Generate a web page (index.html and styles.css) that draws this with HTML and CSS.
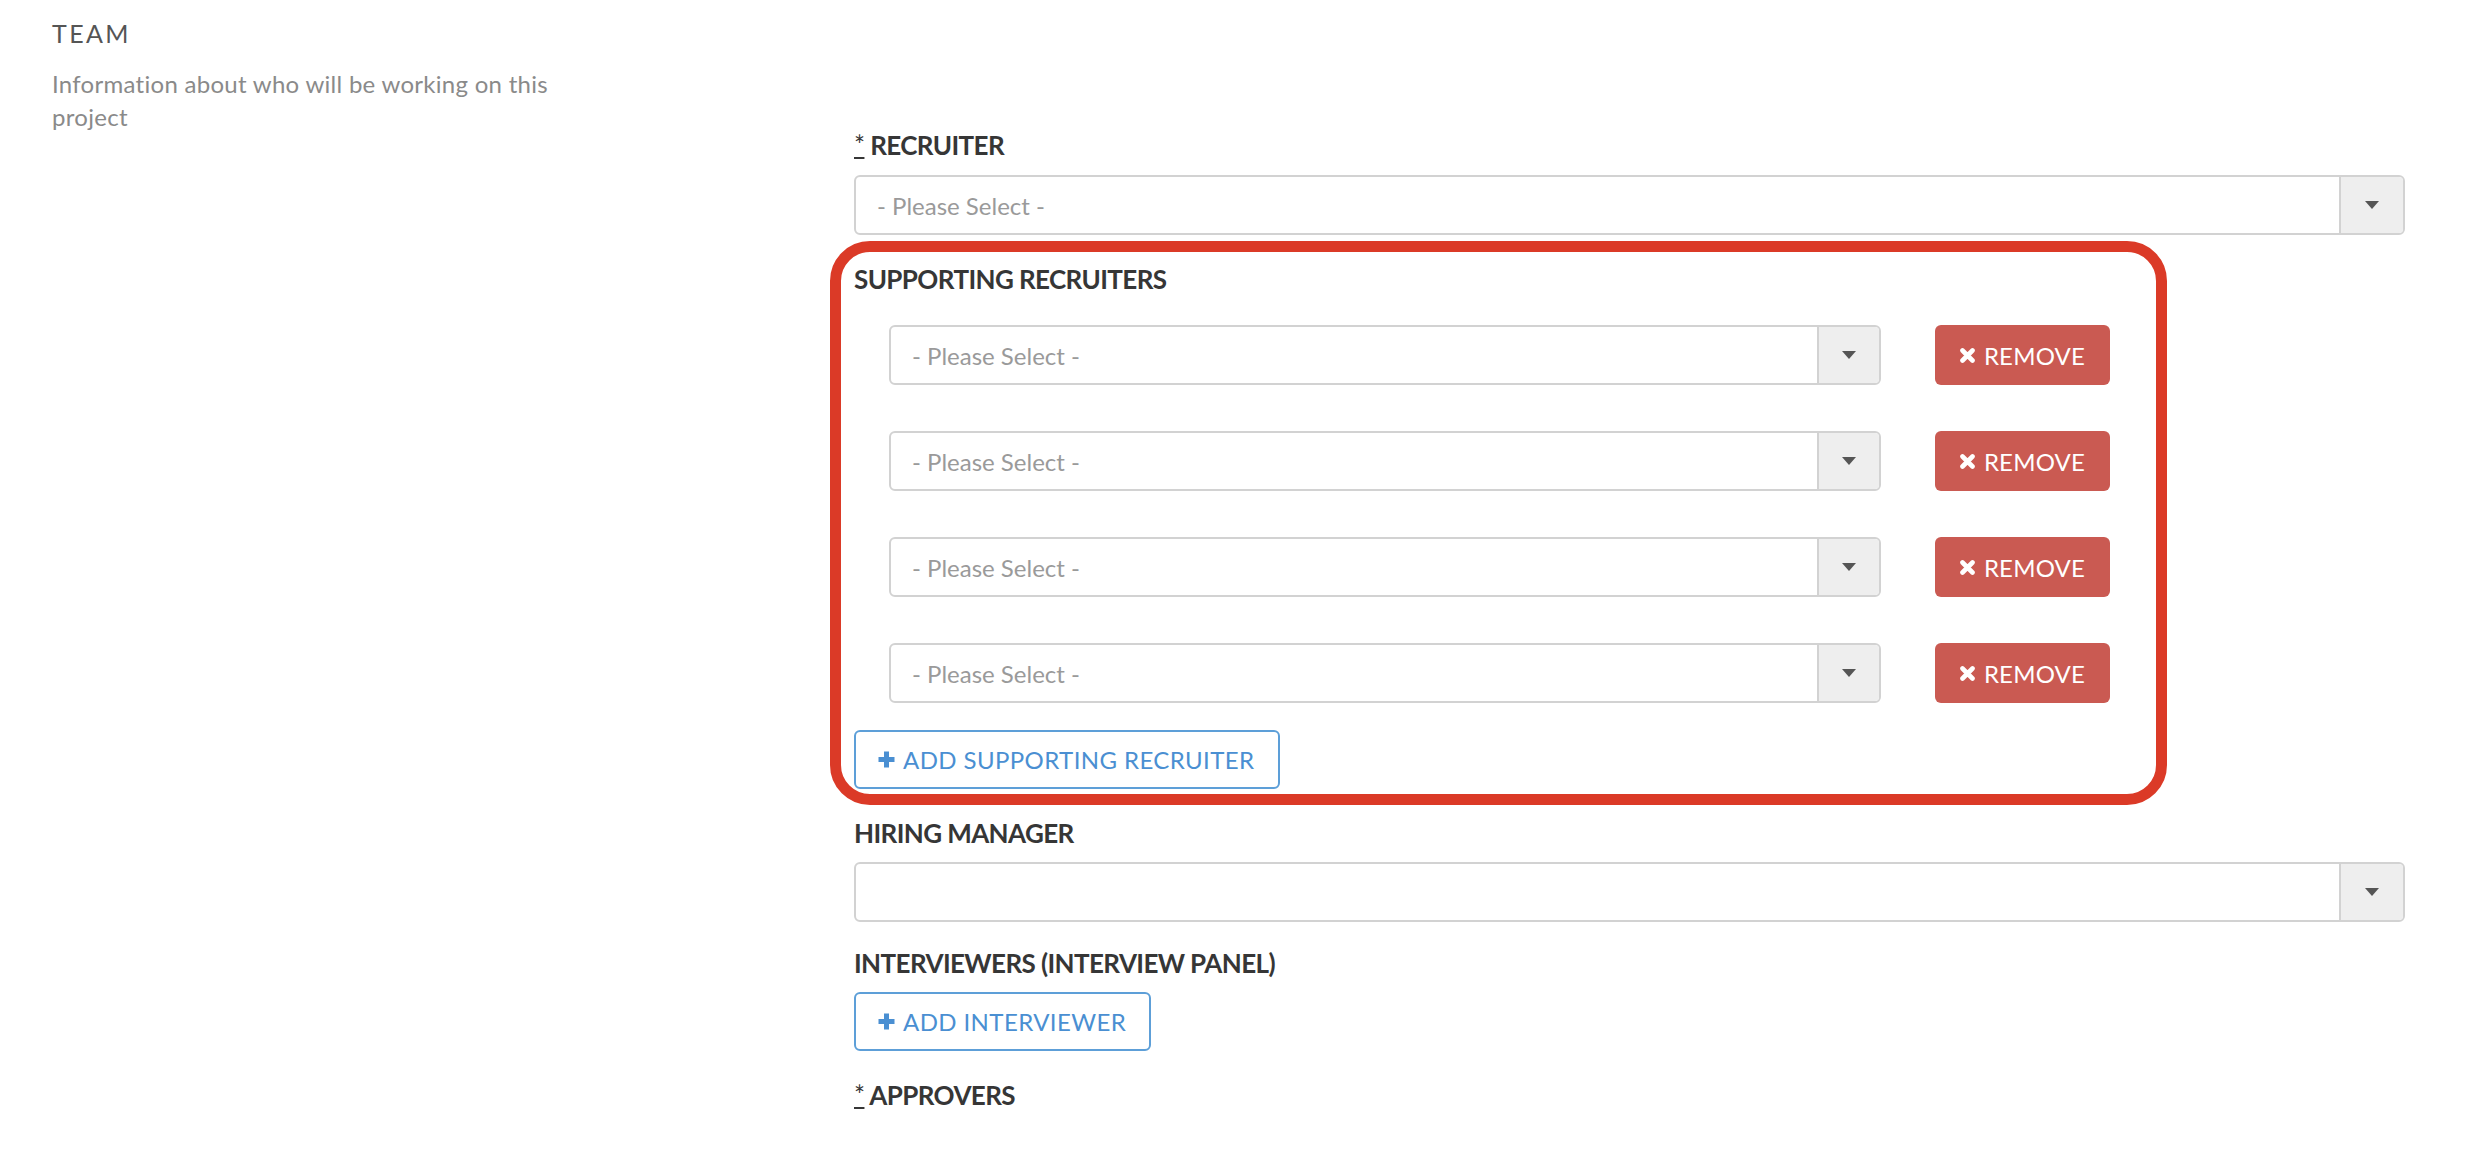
FILE: index.html
```html
<!DOCTYPE html>
<html lang="en">
<head>
<meta charset="utf-8">
<title>Team</title>
<link rel="stylesheet" href="styles.css">
</head>
<body>
<div class="page">
  <section class="intro">
    <h2 class="intro-title">TEAM</h2>
    <p class="intro-text">Information about who will be working on this project</p>
  </section>

  <section class="form">
    <div class="field">
      <label class="field-label"><span class="req">*</span> RECRUITER</label>
      <div class="select">
        <span class="select-value">- Please Select -</span>
        <span class="select-arrow"><svg width="14" height="8" viewBox="0 0 14 8"><path d="M0 0H14L7 8Z" fill="#555"/></svg></span>
      </div>
    </div>

    <div class="group">
      <label class="field-label">SUPPORTING RECRUITERS</label>
      <div class="rows">
        <div class="row">
          <div class="select">
            <span class="select-value">- Please Select -</span>
            <span class="select-arrow"><svg width="14" height="8" viewBox="0 0 14 8"><path d="M0 0H14L7 8Z" fill="#555"/></svg></span>
          </div>
          <button class="btn-remove"><svg class="icon-x" width="15" height="15" viewBox="0 0 15 15"><path d="M2.5 2.5L12.5 12.5M12.5 2.5L2.5 12.5" stroke="#fff" stroke-width="4.6" stroke-linecap="round"/></svg>REMOVE</button>
        </div>
        <div class="row">
          <div class="select">
            <span class="select-value">- Please Select -</span>
            <span class="select-arrow"><svg width="14" height="8" viewBox="0 0 14 8"><path d="M0 0H14L7 8Z" fill="#555"/></svg></span>
          </div>
          <button class="btn-remove"><svg class="icon-x" width="15" height="15" viewBox="0 0 15 15"><path d="M2.5 2.5L12.5 12.5M12.5 2.5L2.5 12.5" stroke="#fff" stroke-width="4.6" stroke-linecap="round"/></svg>REMOVE</button>
        </div>
        <div class="row">
          <div class="select">
            <span class="select-value">- Please Select -</span>
            <span class="select-arrow"><svg width="14" height="8" viewBox="0 0 14 8"><path d="M0 0H14L7 8Z" fill="#555"/></svg></span>
          </div>
          <button class="btn-remove"><svg class="icon-x" width="15" height="15" viewBox="0 0 15 15"><path d="M2.5 2.5L12.5 12.5M12.5 2.5L2.5 12.5" stroke="#fff" stroke-width="4.6" stroke-linecap="round"/></svg>REMOVE</button>
        </div>
        <div class="row">
          <div class="select">
            <span class="select-value">- Please Select -</span>
            <span class="select-arrow"><svg width="14" height="8" viewBox="0 0 14 8"><path d="M0 0H14L7 8Z" fill="#555"/></svg></span>
          </div>
          <button class="btn-remove"><svg class="icon-x" width="15" height="15" viewBox="0 0 15 15"><path d="M2.5 2.5L12.5 12.5M12.5 2.5L2.5 12.5" stroke="#fff" stroke-width="4.6" stroke-linecap="round"/></svg>REMOVE</button>
        </div>
      </div>
      <button class="btn-add"><svg class="icon-plus" width="19" height="19" viewBox="0 0 19 19"><path d="M9.5 1.5V17.5M1.5 9.5H17.5" stroke="#4a8fd2" stroke-width="5"/></svg>ADD SUPPORTING RECRUITER</button>
    </div>

    <div class="field field-hiring">
      <label class="field-label">HIRING MANAGER</label>
      <div class="select">
        <span class="select-value"></span>
        <span class="select-arrow"><svg width="14" height="8" viewBox="0 0 14 8"><path d="M0 0H14L7 8Z" fill="#555"/></svg></span>
      </div>
    </div>

    <div class="field field-interviewers">
      <label class="field-label">INTERVIEWERS (INTERVIEW PANEL)</label>
      <button class="btn-add"><svg class="icon-plus" width="19" height="19" viewBox="0 0 19 19"><path d="M9.5 1.5V17.5M1.5 9.5H17.5" stroke="#4a8fd2" stroke-width="5"/></svg>ADD INTERVIEWER</button>
    </div>

    <div class="field field-approvers">
      <label class="field-label"><span class="req">*</span> APPROVERS</label>
    </div>
  </section>
</div>
</body>
</html>
```

FILE: styles.css
```css
* { box-sizing: border-box; }

html, body {
  margin: 0;
  padding: 0;
  background: #fff;
}

body {
  font-family: Lato, "Open Sans", "Liberation Sans", sans-serif;
  color: #333;
  height: 1154px;
  overflow: hidden;
}

.page {
  display: flex;
  padding: 0 65px 0 52px;
}

.intro {
  width: 802px;
  flex: none;
}

.intro-title {
  margin: 18px 0 0;
  font-size: 25px;
  line-height: 30px;
  font-weight: 400;
  letter-spacing: 2.4px;
  color: #555;
}

.intro-text {
  margin: 19px 0 0;
  max-width: 570px;
  font-size: 24px;
  line-height: 33px;
  letter-spacing: 0.28px;
  color: #8a8a8a;
}

.form {
  flex: 1;
  padding-top: 130px;
}

.field-label {
  display: block;
  font-size: 26px;
  line-height: 31px;
  font-weight: 700;
  letter-spacing: -0.6px;
  color: #363636;
  margin-bottom: 14px;
}

.req {
  font-weight: 400;
  text-decoration: underline;
}

.select {
  display: flex;
  height: 60px;
  border: 2px solid #d2d2d2;
  border-radius: 6px;
  background: #fff;
  overflow: hidden;
}

.select-value {
  flex: 1;
  display: flex;
  align-items: center;
  padding-left: 21px;
  font-size: 24px;
  color: #9a9a9a;
}

.select-arrow {
  width: 64px;
  flex: none;
  display: flex;
  align-items: center;
  justify-content: center;
  background: #eee;
  border-left: 2px solid #d2d2d2;
}

.group {
  width: 1337px;
  margin: 6px 0 0 -24px;
  border: 11px solid #db3a27;
  border-radius: 40px;
  padding: 12px 46px 5px 13px;
}

.group .field-label {
  margin-bottom: 30px;
}

.rows {
  display: flex;
  flex-direction: column;
  gap: 46px;
  padding-left: 35px;
}

.row {
  display: flex;
  gap: 54px;
}

.row .select {
  flex: 1;
}

.row .select-arrow {
  width: 62px;
}

.btn-remove {
  width: 175px;
  height: 60px;
  flex: none;
  display: flex;
  align-items: center;
  justify-content: center;
  gap: 9px;
  border: none;
  border-radius: 6px;
  background: #ca5a52;
  color: #fff;
  font-family: inherit;
  font-size: 24px;
  letter-spacing: 0.2px;
  padding: 0;
}

.btn-add {
  display: flex;
  align-items: center;
  gap: 7px;
  height: 59px;
  margin-top: 27px;
  padding: 0 23px 0 21px;
  border: 2px solid #5d9fd8;
  border-radius: 6px;
  background: #fff;
  color: #4a8fd2;
  font-family: inherit;
  font-size: 24px;
  letter-spacing: 0.4px;
}

.field-hiring {
  margin-top: 13px;
}

.field-hiring .field-label {
  margin-bottom: 13px;
}

.field-interviewers {
  margin-top: 26px;
}

.field-interviewers .field-label {
  margin-bottom: 13px;
}

.field-interviewers .btn-add {
  margin-top: 0;
}

.field-approvers {
  margin-top: 29px;
}
```
